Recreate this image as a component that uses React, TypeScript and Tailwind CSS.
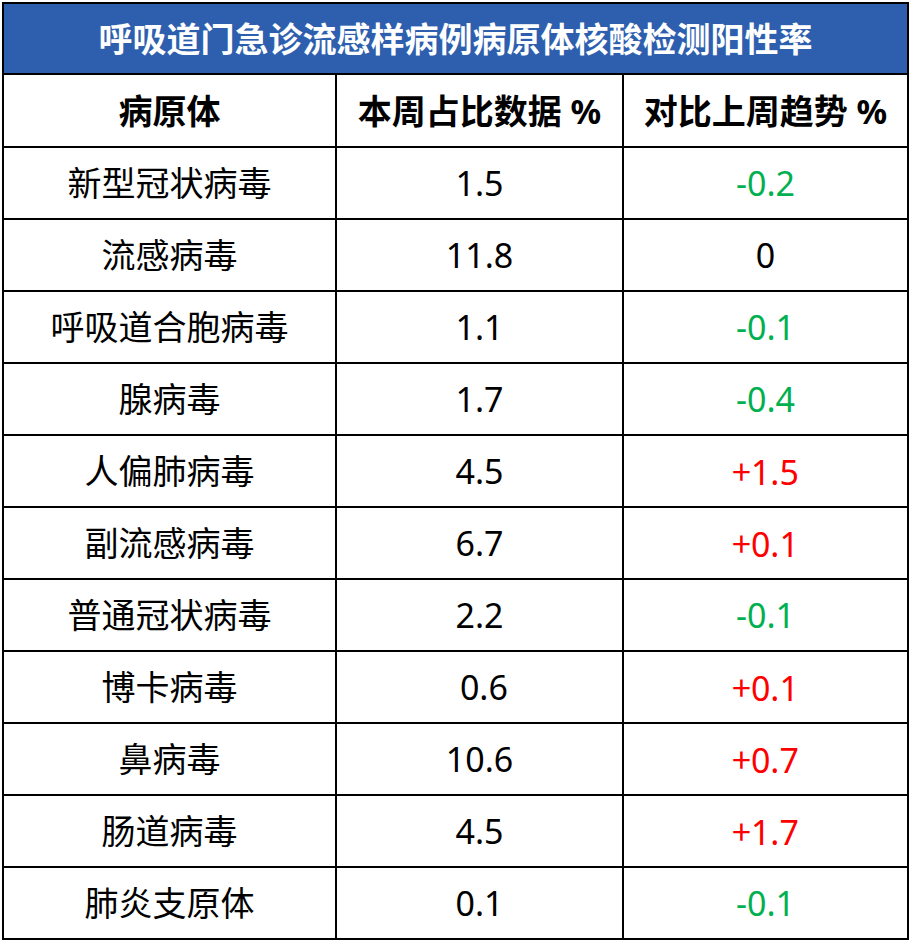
import React from 'react'

// ─── Data ─────────────────────────────────────────────────────────────────────

interface Row {
  name: string
  value: string
  trend: string
}

const rows: Row[] = [
  { name: '新型冠状病毒', value: '1.5', trend: '-0.2' },
  { name: '流感病毒', value: '11.8', trend: '0' },
  { name: '呼吸道合胞病毒', value: '1.1', trend: '-0.1' },
  { name: '腺病毒', value: '1.7', trend: '-0.4' },
  { name: '人偏肺病毒', value: '4.5', trend: '+1.5' },
  { name: '副流感病毒', value: '6.7', trend: '+0.1' },
  { name: '普通冠状病毒', value: '2.2', trend: '-0.1' },
  { name: '博卡病毒', value: '\u00a00.6', trend: '+0.1' },
  { name: '鼻病毒', value: '10.6', trend: '+0.7' },
  { name: '肠道病毒', value: '4.5', trend: '+1.7' },
  { name: '肺炎支原体', value: '0.1', trend: '-0.1' },
]

function trendColor(t: string) {
  if (t.startsWith('+')) return 'text-[#ff0000]'
  if (t.startsWith('-')) return 'text-[#00b050]'
  return 'text-black'
}

// ─── Component ────────────────────────────────────────────────────────────────

export default function App() {
  return (
    <div className="bg-white w-[912px] h-[941px] pl-[2px] pt-[2px] font-['Noto_Sans','Noto_Sans_CJK_SC',sans-serif]">
      <div className="w-[907px] border-2 border-black bg-black">
        {/* Title */}
        <div className="h-[69px] bg-[#2e5fae] flex items-center justify-center text-white font-bold text-[34px] leading-none">
          呼吸道门急诊流感样病例病原体核酸检测阳性率
        </div>

        <div className="grid grid-cols-[331px_285px_283px] gap-[2px] pt-[2px]">
          {/* Header */}
          {['病原体', '本周占比数据 %', '对比上周趋势 %'].map(h => (
            <div
              key={h}
              className="h-[71px] bg-white flex items-center justify-center font-bold text-[34px] leading-none text-black"
            >
              {h}
            </div>
          ))}

          {/* Rows */}
          {rows.map(r => (
            <React.Fragment key={r.name}>
              <div className="h-[70px] bg-white flex items-center justify-center text-[34px] leading-none text-black">
                {r.name}
              </div>
              <div className="h-[70px] bg-white flex items-center justify-center text-[34px] leading-none text-black whitespace-pre">
                {r.value}
              </div>
              <div className={`h-[70px] bg-white flex items-center justify-center text-[34px] leading-none ${trendColor(r.trend)}`}>
                {r.trend.startsWith('+') ? (
                  <span>
                    <span className="font-['Noto_Sans_CJK_SC',sans-serif]">+</span>
                    {r.trend.slice(1)}
                  </span>
                ) : (
                  r.trend
                )}
              </div>
            </React.Fragment>
          ))}
        </div>
      </div>
    </div>
  )
}
